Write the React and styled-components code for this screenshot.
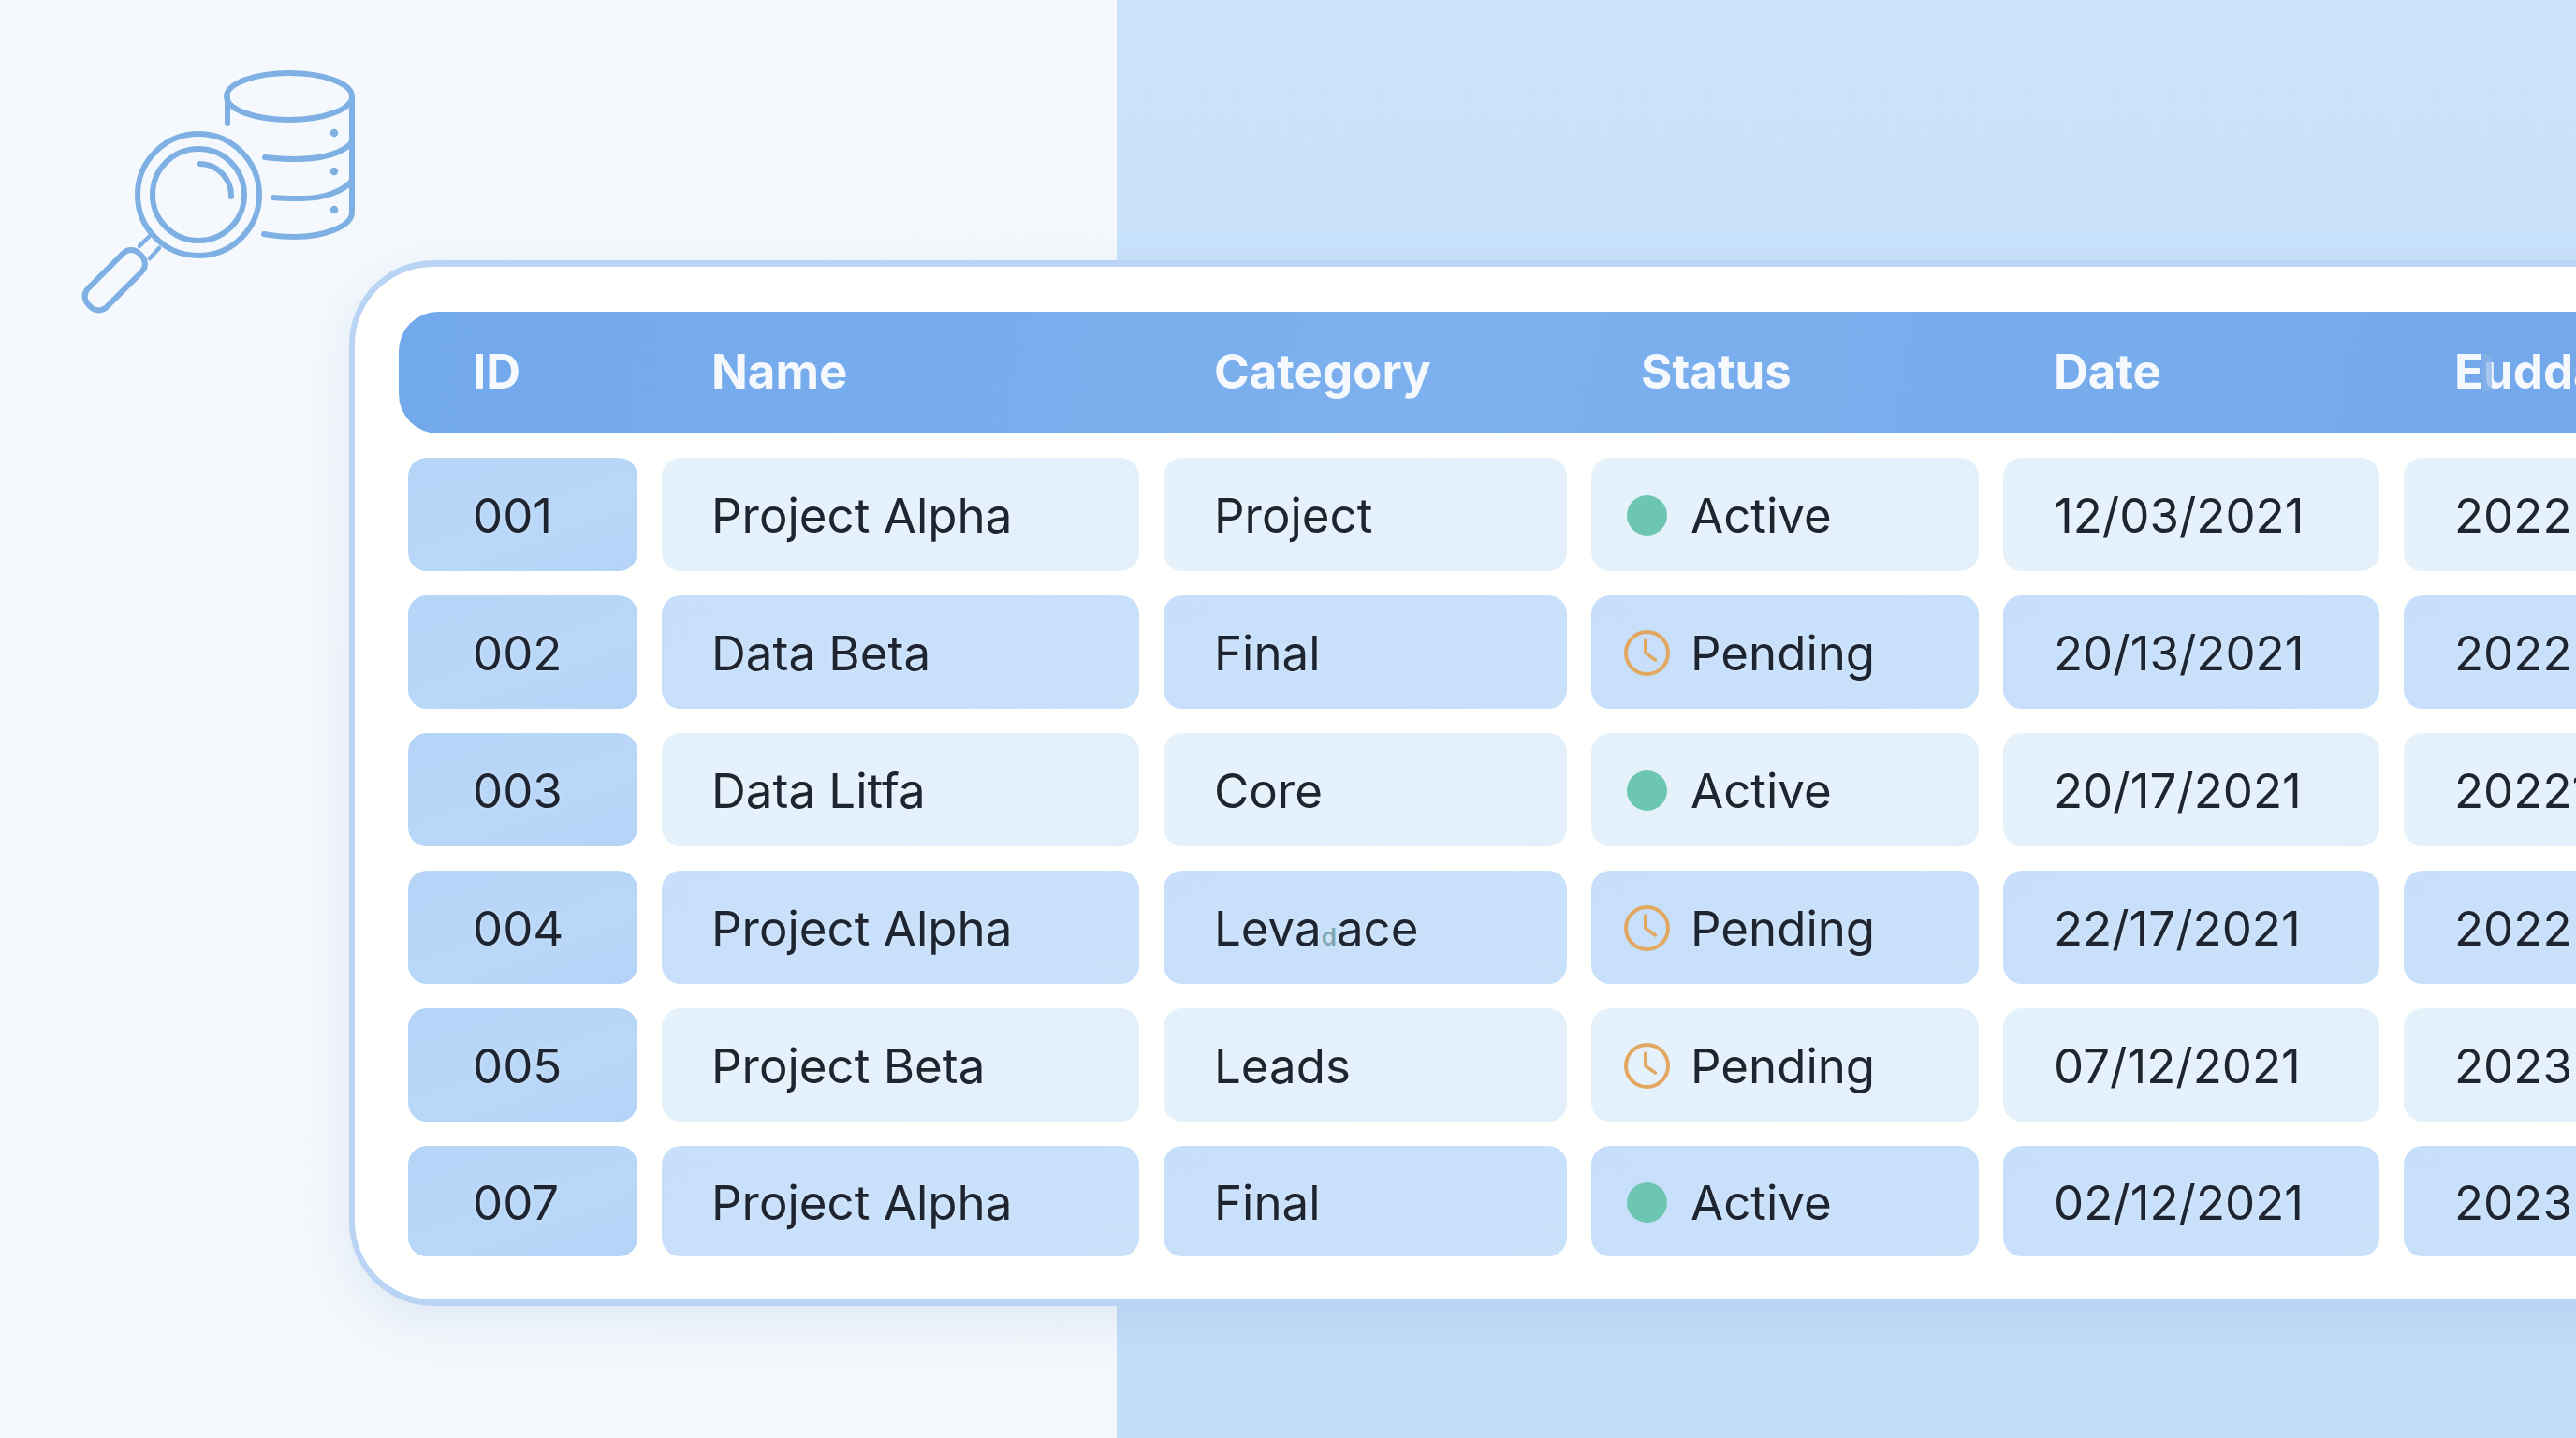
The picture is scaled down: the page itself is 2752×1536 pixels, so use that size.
import React from "react";
import styled, { createGlobalStyle } from "styled-components";

const COLUMNS = "245px 510px 431px 414px 402px 320px";

const rows = [
	{ id: "001", name: "Project Alpha", category: "Project", status: "Active", date: "12/03/2021", end: "2022" },
	{ id: "002", name: "Data Beta", category: "Final", status: "Pending", date: "20/13/2021", end: "2022" },
	{ id: "003", name: "Data Litfa", category: "Core", status: "Active", date: "20/17/2021", end: "20221" },
	{ id: "004", name: "Project Alpha", category: "Levaace", status: "Pending", date: "22/17/2021", end: "2022" },
	{ id: "005", name: "Project Beta", category: "Leads", status: "Pending", date: "07/12/2021", end: "2023" },
	{ id: "007", name: "Project Alpha", category: "Final", status: "Active", date: "02/12/2021", end: "2023" }
];

const GlobalStyle = createGlobalStyle`
	html, body {
		margin: 0;
		padding: 0;
		background: #f4f8fc;
	}
	* {
		box-sizing: border-box;
	}
`;

const Stage = styled.div`
	position: relative;
	width: 2752px;
	height: 1536px;
	overflow: hidden;
	padding: 278px 0 0 373px;
	font-family: Inter, "Noto Sans", sans-serif;
	background:
		linear-gradient(180deg, #cae2fb 0%, #c8e0fa 50%, #c3dcf8 100%) right top / 1559px 100% no-repeat,
		linear-gradient(135deg, #f5f9fd 0%, #f3f7fc 100%);
`;

const IconSlot = styled.svg`
	position: absolute;
	left: 60px;
	top: 50px;
	width: 360px;
	height: 310px;
	fill: none;
	stroke: #7fb0e3;
	stroke-width: 6;
	stroke-linecap: round;
	stroke-linejoin: round;
`;

const Card = styled.section`
	width: 2500px;
	height: 1117px;
	padding: 48px 0 0 47px;
	background: #fffffe;
	border: solid #b9d4f5;
	border-width: 7px 7px 7px 6px;
	border-radius: 90px;
	box-shadow: 0 16px 50px rgba(110, 150, 200, 0.16);
`;

const HeaderBar = styled.div`
	display: grid;
	grid-template-columns: ${COLUMNS};
	column-gap: 26px;
	align-items: center;
	height: 130px;
	padding: 0 0 3px 10px;
	border-radius: 42px;
	background: linear-gradient(100deg, #72a9ec 0%, #7cb0ee 45%, #72a8eb 100%);
`;

const HeaderCell = styled.div`
	position: relative;
	padding-left: ${(p) => p.$inset}px;
	font-size: 51px;
	font-weight: 700;
	color: #f5f9fe;
	white-space: nowrap;
`;

const HeaderSmudge = styled.span`
	position: absolute;
	left: 84px;
	top: 12px;
	width: 10px;
	height: 40px;
	background: rgba(135, 178, 232, 0.7);
`;

const Rows = styled.div`
	display: flex;
	flex-direction: column;
	gap: 26px;
	margin-top: 26px;
	padding-left: 10px;
`;

const Row = styled.div`
	display: grid;
	grid-template-columns: ${COLUMNS};
	column-gap: 26px;
	height: 121px;

	&:last-child {
		height: 118px;
	}
`;

const Cell = styled.div`
	display: flex;
	align-items: center;
	padding: 2px 0 0 ${(p) => p.$inset}px;
	border-radius: 20px;
	font-size: 51px;
	color: #1e2530;
	text-shadow: 0 0 5px rgba(255, 255, 255, 0.35);
	white-space: nowrap;
	overflow: hidden;
	background: ${(p) => (p.$light ? "linear-gradient(135deg, #e6f2fb, #e3effa)" : "linear-gradient(135deg, #c7dffa, #c9e1fb)")};
`;

const IdCell = styled(Cell)`
	background: linear-gradient(160deg, #b5d4f7 0%, #b9d7f8 60%, #b4d3f7 100%);
`;

const StatusCell = styled(Cell)`
	gap: 21px;
`;

const IconWrap = styled.span`
	display: flex;
	flex: none;
	justify-content: center;
	align-items: center;
	width: 51px;
	height: 51px;
`;

const Dot = styled.span`
	width: 43px;
	height: 43px;
	border-radius: 50%;
	background: #6cc6b1;
`;

const ClockSvg = styled.svg`
	width: 51px;
	height: 51px;
	fill: none;
	stroke: #e2a862;
	stroke-linecap: round;
	stroke-linejoin: round;
`;

const Ghost = styled.span`
	font-size: 26px;
	font-weight: 600;
	color: rgba(70, 125, 130, 0.6);
`;

const ClockIcon = () => (
	<ClockSvg viewBox="0 0 51 51">
		<circle cx="25.5" cy="25.5" r="22.5" strokeWidth="4" />
		<path d="M23.8 12 V25.5 L34.5 33" strokeWidth="3.5" />
	</ClockSvg>
);

const SearchDatabaseIcon = () => (
	<IconSlot viewBox="0 0 360 310">
		<ellipse cx="249" cy="53" rx="67" ry="25" />
		<path d="M183 53 V82" />
		<path d="M316 53 V177 C316 192 285 203 255 203 C243 203 232 202 222 200" />
		<path d="M316 102 C306 114 283 120 255 120 C243 120 232 119 223 118" />
		<path d="M316 143 C306 155 285 162 262 162 C252 162 242 162 232 161" />
		<circle cx="297" cy="92" r="3.5" fill="#7fb0e3" strokeWidth="1.5" />
		<circle cx="297" cy="133" r="3.5" fill="#7fb0e3" strokeWidth="1.5" />
		<circle cx="297" cy="174" r="3.5" fill="#7fb0e3" strokeWidth="1.5" />
		<circle cx="152" cy="158" r="65" />
		<circle cx="152" cy="158" r="49" />
		<path d="M153 125 A34 34 0 0 1 187 160" />
		<path d="M99 203 L89 213" strokeWidth="4.5" />
		<path d="M110 215 L100 226" strokeWidth="4.5" />
		<rect x="-14" y="0" width="28" height="77" rx="12" transform="translate(90 222) rotate(45)" />
	</IconSlot>
);

const App = () => {
	return (
		<>
			<GlobalStyle />
			<Stage>
				<SearchDatabaseIcon />
				<Card>
					<HeaderBar>
						<HeaderCell $inset={69}>ID</HeaderCell>
						<HeaderCell $inset={53}>Name</HeaderCell>
						<HeaderCell $inset={54}>Category</HeaderCell>
						<HeaderCell $inset={53}>Status</HeaderCell>
						<HeaderCell $inset={54}>Date</HeaderCell>
						<HeaderCell $inset={54}>
							Eudda
							<HeaderSmudge />
						</HeaderCell>
					</HeaderBar>
					<Rows>
						{rows.map((row, i) => {
							const light = i % 2 === 0;
							return (
								<Row key={row.id}>
									<IdCell $inset={69}>{row.id}</IdCell>
									<Cell $inset={53} $light={light}>{row.name}</Cell>
									<Cell $inset={54} $light={light}>
										{row.category === "Levaace" ? (
											<span>
												Leva
												<Ghost>d</Ghost>
												ace
											</span>
										) : (
											row.category
										)}
									</Cell>
									<StatusCell $inset={34} $light={light}>
										<IconWrap>{row.status === "Active" ? <Dot /> : <ClockIcon />}</IconWrap>
										{row.status}
									</StatusCell>
									<Cell $inset={54} $light={light}>{row.date}</Cell>
									<Cell $inset={54} $light={light}>{row.end}</Cell>
								</Row>
							);
						})}
					</Rows>
				</Card>
			</Stage>
		</>
	);
};

export default App;
